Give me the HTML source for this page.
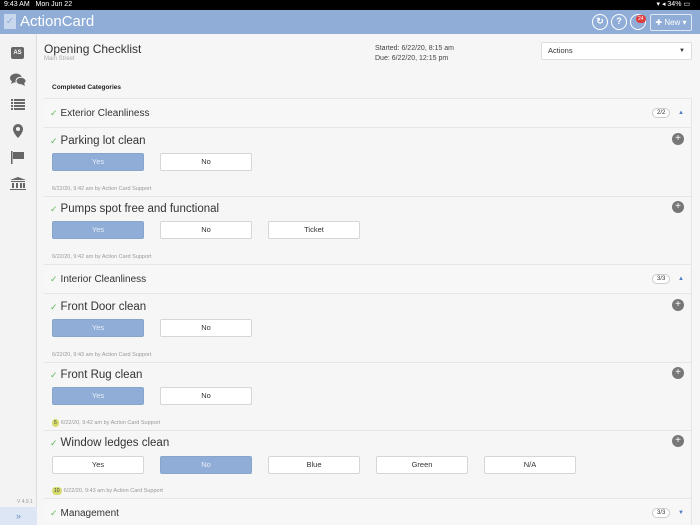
<!DOCTYPE html>
<html><head><style>
*{margin:0;padding:0;box-sizing:border-box}
body{width:700px;height:525px;overflow:hidden;font-family:"Liberation Sans",sans-serif;background:#f6f6f6;position:relative;color:#333}
.abs{position:absolute}
.sb{left:0;top:0;width:700px;height:10px;background:#000;color:#fff;font-size:7px;line-height:10px;padding-left:4px}
.hd{left:0;top:10px;width:700px;height:24px;background:#8fadd6}
.side{left:0;top:34px;width:37px;height:491px;background:#f3f3f3;border-right:1px solid #ddd}
.main{left:44px;width:648px;background:#f7f7f7;border-top:1px solid #e6e6e6}
.cat{font-size:10px;color:#333}
.ck{color:#5cb85c;font-size:9px;margin-right:3px}
.title{font-size:11.5px;color:#333}
.btn{height:18px;width:92px;border:1px solid #d6d6d6;background:#fff;border-radius:2px;font-size:7.5px;text-align:center;line-height:16px;color:#333}
.sel{background:#8fadd6;border-color:#8aa5cc;color:#e8eef8}
.meta{font-size:5.5px;color:#999}
.plus{width:12px;height:12px;border-radius:50%;background:#777;color:#fff;font-size:10px;line-height:11px;text-align:center;left:672px}
.pill{font-size:6px;border:1px solid #ccc;border-radius:6px;padding:1px 4px;background:#fff;color:#333}
.badge{background:#d5dc6b;border-radius:5px;font-size:5px;padding:1px 2px;color:#444;margin-right:2px}
.hb{width:16px;height:16px;border:1.5px solid #fff;border-radius:50%;color:#fff;font-size:9px;text-align:center;line-height:13px;font-weight:bold}
</style></head><body>
<div class="abs sb">9:43 AM&nbsp;&nbsp; Mon Jun 22<span style="position:absolute;right:10px">▾ ◂ 34% ▭</span></div>
<div class="abs hd">
 <div class="abs" style="left:4px;top:4px;width:12px;height:15px;background:#c8d7ec;color:#8fadd6;font-size:10px;text-align:center;line-height:15px">✓</div>
 <div class="abs" style="left:20px;top:3px;color:#fff;font-size:15px">ActionCard</div>
 <div class="abs hb" style="left:592px;top:4px">↻</div>
 <div class="abs hb" style="left:611px;top:4px">?</div>
 <div class="abs hb" style="left:630px;top:4px"></div>
 <div class="abs" style="left:636px;top:5px;background:#e03c3c;color:#fff;font-size:5px;border-radius:4px;padding:1px 2px">24</div>
 <div class="abs" style="left:650px;top:4px;width:42px;height:17px;border:1px solid #dfe7f3;border-radius:2px;color:#fff;font-size:8px;text-align:center;line-height:15px">✚ New ▾</div>
</div>
<div class="abs side"></div>
<div class="abs" style="left:11px;top:47px;width:13px;height:12px;background:#666;border-radius:2px;color:#fff;font-size:6px;font-weight:bold;text-align:center;line-height:12px">AS</div>
<svg class="abs" style="left:10px;top:73px" width="16" height="13"><ellipse cx="6" cy="5" rx="6" ry="4.5" fill="#666"/><path d="M2 8l-1 3 4-2z" fill="#666"/><ellipse cx="11" cy="8" rx="5" ry="3.8" fill="#666" stroke="#f3f3f3" stroke-width="1"/><path d="M14 10l1 3-4-2z" fill="#666"/></svg>
<svg class="abs" style="left:11px;top:99px" width="14" height="11"><g fill="#666"><rect x="0" y="0" width="2" height="2"/><rect x="3" y="0" width="11" height="2"/><rect x="0" y="3" width="2" height="2"/><rect x="3" y="3" width="11" height="2"/><rect x="0" y="6" width="2" height="2"/><rect x="3" y="6" width="11" height="2"/><rect x="0" y="9" width="2" height="2"/><rect x="3" y="9" width="11" height="2"/></g></svg>
<svg class="abs" style="left:13px;top:124px" width="10" height="14"><path d="M5 0a5 5 0 0 1 5 5c0 4-5 9-5 9S0 9 0 5a5 5 0 0 1 5-5z" fill="#666"/><circle cx="5" cy="5" r="2" fill="#f3f3f3"/></svg>
<svg class="abs" style="left:11px;top:151px" width="14" height="13"><rect x="0" y="0" width="1.5" height="13" fill="#666"/><path d="M2 1h11v7H2z" fill="#666"/></svg>
<svg class="abs" style="left:10px;top:177px" width="16" height="13"><path d="M8 0l8 3H0z M1 4h14v1H1z M2 6h2v5H2z M6 6h2v5H6z M10 6h2v5h-2z M13 6h2v5h-2z M0 12h16v1H0z" fill="#666"/></svg>
<div class="abs" style="left:17px;top:499px;font-size:5px;color:#999">V 4.9.1</div>
<div class="abs" style="left:0;top:507px;width:37px;height:18px;background:#dce6f4;color:#6f8fc0;font-size:9px;text-align:center;line-height:18px">»</div>

<div class="abs" style="left:44px;top:42px;font-size:12px;color:#333">Opening Checklist</div>
<div class="abs" style="left:44px;top:56px;font-size:6px;color:#aaa">Main Street</div>
<div class="abs" style="left:375px;top:44px;font-size:7px;color:#444;line-height:10px">Started: 6/22/20, 8:15 am<br>Due: 6/22/20, 12:15 pm</div>
<div class="abs" style="left:541px;top:42px;width:151px;height:18px;background:#fff;border:1px solid #ddd;border-radius:2px;font-size:7.5px;line-height:16px;padding-left:6px">Actions<span style="position:absolute;right:6px;font-size:6px">▼</span></div>
<div class="abs" style="left:52px;top:84px;font-size:6.5px;font-weight:bold;color:#222">Completed Categories</div>

<div class="abs main" style="top:98px;height:30px;border-bottom:1px solid #e6e6e6"><div class="abs cat" style="left:6px;top:9px"><span class="ck">✓</span>Exterior Cleanliness</div><span class="abs pill" style="left:608px;top:9px">2/2</span><span class="abs" style="left:634px;top:11px;color:#4a7fc1;font-size:6px">▲</span></div>
<div class="abs main" style="top:264px;height:30px;border-bottom:1px solid #e6e6e6"><div class="abs cat" style="left:6px;top:9px"><span class="ck">✓</span>Interior Cleanliness</div><span class="abs pill" style="left:608px;top:9px">3/3</span><span class="abs" style="left:634px;top:11px;color:#4a7fc1;font-size:6px">▲</span></div>
<div class="abs main" style="top:498px;height:27px"><div class="abs cat" style="left:6px;top:9px"><span class="ck">✓</span>Management</div><span class="abs pill" style="left:608px;top:9px">3/3</span><span class="abs" style="left:634px;top:11px;color:#4a7fc1;font-size:6px">▼</span></div>

<div class="abs" style="left:44px;top:196px;width:648px;height:1px;background:#e6e6e6"></div>
<div class="abs" style="left:44px;top:362px;width:648px;height:1px;background:#e6e6e6"></div>
<div class="abs" style="left:44px;top:430px;width:648px;height:1px;background:#e6e6e6"></div>
<div class="abs" style="left:691px;top:98px;width:1px;height:427px;background:#e6e6e6"></div>

<div class="abs title" style="left:50px;top:135px"><span class="ck">✓</span>Parking lot clean</div>
<div class="abs plus" style="top:133px">+</div>
<div class="abs btn sel" style="left:52px;top:153px">Yes</div><div class="abs btn" style="left:160px;top:153px">No</div>
<div class="abs meta" style="left:52px;top:186px">6/22/20, 9:42 am by Action Card Support</div>

<div class="abs title" style="left:50px;top:203px"><span class="ck">✓</span>Pumps spot free and functional</div>
<div class="abs plus" style="top:201px">+</div>
<div class="abs btn sel" style="left:52px;top:221px">Yes</div><div class="abs btn" style="left:160px;top:221px">No</div><div class="abs btn" style="left:268px;top:221px">Ticket</div>
<div class="abs meta" style="left:52px;top:254px">6/22/20, 9:42 am by Action Card Support</div>

<div class="abs title" style="left:50px;top:301px"><span class="ck">✓</span>Front Door clean</div>
<div class="abs plus" style="top:299px">+</div>
<div class="abs btn sel" style="left:52px;top:319px">Yes</div><div class="abs btn" style="left:160px;top:319px">No</div>
<div class="abs meta" style="left:52px;top:352px">6/22/20, 9:43 am by Action Card Support</div>

<div class="abs title" style="left:50px;top:369px"><span class="ck">✓</span>Front Rug clean</div>
<div class="abs plus" style="top:367px">+</div>
<div class="abs btn sel" style="left:52px;top:387px">Yes</div><div class="abs btn" style="left:160px;top:387px">No</div>
<div class="abs meta" style="left:52px;top:420px"><span class="badge">5</span>6/22/20, 9:42 am by Action Card Support</div>

<div class="abs title" style="left:50px;top:437px"><span class="ck">✓</span>Window ledges clean</div>
<div class="abs plus" style="top:435px">+</div>
<div class="abs btn" style="left:52px;top:456px">Yes</div><div class="abs btn sel" style="left:160px;top:456px">No</div><div class="abs btn" style="left:268px;top:456px">Blue</div><div class="abs btn" style="left:376px;top:456px">Green</div><div class="abs btn" style="left:484px;top:456px">N/A</div>
<div class="abs meta" style="left:52px;top:488px"><span class="badge">10</span>6/22/20, 9:43 am by Action Card Support</div>
</body></html>
